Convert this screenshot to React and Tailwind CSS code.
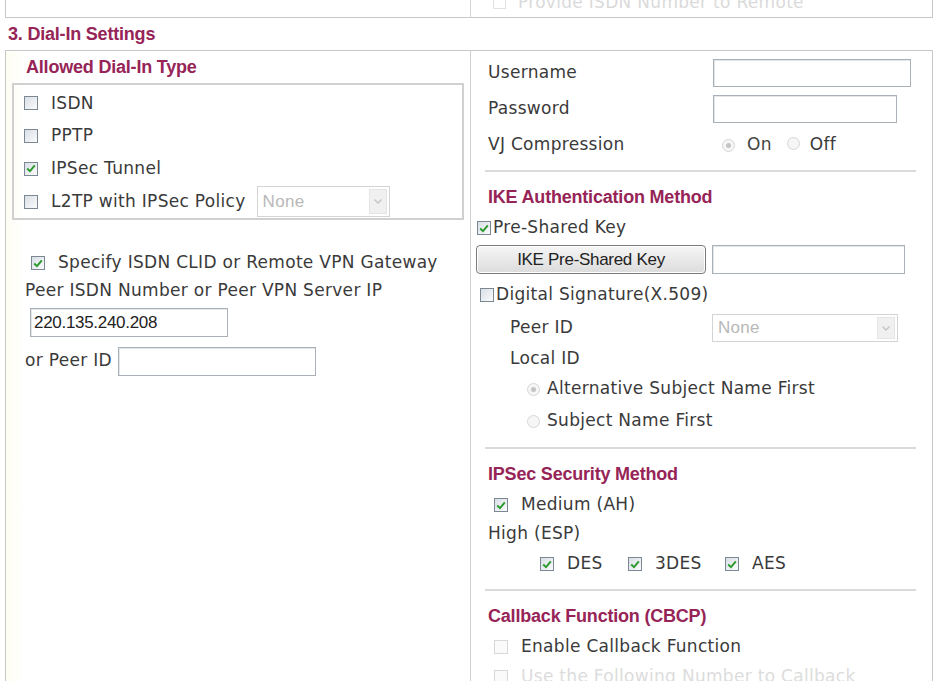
import React from "react";

const Check = ({ checked, disabled }) => (
  <span
    className={
      "inline-flex shrink-0 w-[14px] h-[14px] items-center justify-center border " +
      (disabled
        ? "border-[#d8d8d8] bg-[#fafafa]"
        : "border-[#7b8894] bg-gradient-to-br from-[#d9dfe6] to-[#fbfbfb]")
    }
  >
    {checked && (
      <svg width="10" height="9" viewBox="0 0 10 9">
        <path d="M1.2 4.5 L4 7.2 L8.8 1.4" fill="none" stroke="#2a9a2a" strokeWidth="1.9" />
      </svg>
    )}
  </span>
);

const Radio = ({ checked }) => (
  <span className="inline-flex shrink-0 w-[13px] h-[13px] rounded-full border border-[#d6d6d6] bg-[#f6f6f6] items-center justify-center">
    {checked && <span className="w-[5px] h-[5px] rounded-full bg-[#c4c4c4]" />}
  </span>
);

const Heading = ({ children, className = "" }) => (
  <div
    className={"text-[18px] font-bold text-[#962457] tracking-[-0.2px] " + className}
    style={{ fontFamily: '"Liberation Sans", Arial, sans-serif' }}
  >
    {children}
  </div>
);

const Input = ({ className = "", value = "" }) => (
  <div
    className={
      "border border-[#a9b0b8] bg-white shadow-[inset_1px_1px_0_#e4e7ea] flex items-center px-[3px] text-[17px] text-[#222] tracking-[-0.3px] " +
      className
    }
    style={{ fontFamily: '"Liberation Sans", Arial, sans-serif' }}
  >
    {value}
  </div>
);

const Select = ({ className = "" }) => (
  <div
    className={"border border-[#d4d4d4] bg-white flex items-stretch text-[17px] text-[#b8b8b8] " + className}
    style={{ fontFamily: '"Liberation Sans", Arial, sans-serif' }}
  >
    <span className="flex-1 flex items-center pl-[5px]">None</span>
    <span className="w-[18px] m-[2px] bg-[#f0f0f0] border border-[#e4e4e4] flex items-center justify-center">
      <svg width="8" height="5" viewBox="0 0 8 5">
        <path d="M0.5 0.5 L4 4 L7.5 0.5" fill="none" stroke="#c4c4c4" strokeWidth="1.4" />
      </svg>
    </span>
  </div>
);

const Sep = ({ className = "" }) => (
  <div className={"shrink-0 ml-[14px] w-[431px] h-[2px] bg-[#dadada] " + className} />
);

export default function App() {
  return (
    <div
      className="w-[937px] h-[681px] overflow-hidden bg-white text-[17px] text-[#3a3a3a] tracking-[0.3px]"
      style={{ fontFamily: '"DejaVu Sans", Verdana, sans-serif' }}
    >
      {/* top partial box */}
      <div className="ml-[5px] w-[928px] h-[18px] flex border-x border-b border-[#c8c8c8]">
        <div className="w-[465px] border-r border-[#d4d4d4]" />
        <div className="flex-1 overflow-hidden pl-[22px]">
          <div className="-mt-[10px] flex items-center gap-[12px] text-[#dadada]">
            <span className="w-[13px] h-[13px] border border-[#e2e2e2]" />
            <span>Provide ISDN Number to Remote</span>
          </div>
        </div>
      </div>

      {/* section heading */}
      <div className="h-[32px] flex items-center pl-[8px]">
        <Heading>3. Dial-In Settings</Heading>
      </div>

      {/* main box */}
      <div className="ml-[5px] w-[928px] border-t border-x border-[#c8c8c8] flex">
        {/* left cell */}
        <div className="w-[465px] border-r border-[#cfcfcf] flex flex-col bg-gradient-to-r from-[#fdfdf3] via-white via-[4%] to-white">
          <div className="h-[32px] flex items-center pl-[20px]">
            <Heading>Allowed Dial-In Type</Heading>
          </div>
          <div className="ml-[6px] w-[452px] h-[137px] border-2 border-[#d0d0d0] pt-[2px] flex flex-col">
            <div className="h-[33px] flex items-center pl-[10px] gap-[13px]">
              <Check />
              <span>ISDN</span>
            </div>
            <div className="h-[33px] flex items-center pl-[10px] gap-[13px]">
              <Check />
              <span>PPTP</span>
            </div>
            <div className="h-[33px] flex items-center pl-[10px] gap-[13px]">
              <Check checked />
              <span>IPSec Tunnel</span>
            </div>
            <div className="h-[33px] flex items-center pl-[10px] gap-[13px]">
              <Check />
              <span>L2TP with IPSec Policy</span>
              <Select className="-ml-[2px] w-[133px] h-[31px]" />
            </div>
          </div>

          <div className="mt-[29px] h-[28px] flex items-center pl-[25px] gap-[13px]">
            <Check checked />
            <span>Specify ISDN CLID or Remote VPN Gateway</span>
          </div>
          <div className="h-[28px] flex items-center pl-[19px]">Peer ISDN Number or Peer VPN Server IP</div>
          <Input className="mt-[3px] ml-[24px] w-[198px] h-[29px]" value="220.135.240.208" />
          <div className="mt-[9px] h-[30px] flex items-center pl-[19px]">
            <span className="w-[93px]">or Peer ID</span>
            <Input className="w-[198px] h-[29px]" />
          </div>
        </div>

        {/* right cell */}
        <div className="flex-1 flex flex-col pt-[4px]">
          <div className="h-[36px] flex items-center pl-[17px]">
            <span className="w-[225px]">Username</span>
            <Input className="w-[198px] h-[28px]" />
          </div>
          <div className="h-[36px] flex items-center pl-[17px]">
            <span className="w-[225px]">Password</span>
            <Input className="w-[184px] h-[28px]" />
          </div>
          <div className="h-[36px] flex items-center pl-[17px]">
            <span className="w-[234px]">VJ Compression</span>
            <Radio checked />
            <span className="ml-[12px] text-[#444]">On</span>
            <span className="ml-[15px]">
              <Radio />
            </span>
            <span className="ml-[10px]">Off</span>
          </div>
          <Sep className="mt-[7px]" />

          <div className="mt-[8px] h-[34px] flex items-center pl-[17px]">
            <Heading>IKE Authentication Method</Heading>
          </div>
          <div className="h-[28px] flex items-center pl-[6px] gap-[2px]">
            <Check checked />
            <span>Pre-Shared Key</span>
          </div>
          <div className="mt-[3px] h-[29px] flex items-center pl-[5px]">
            <button
              className="w-[230px] h-[29px] rounded-[4px] border border-[#7a7a7a] bg-gradient-to-b from-[#f6f6f6] to-[#dcdcdc] text-[17px] text-[#222] tracking-[-0.3px] shadow-[inset_0_0_0_1px_#fff]"
              style={{ fontFamily: '"Liberation Sans", Arial, sans-serif' }}
            >
              IKE Pre-Shared Key
            </button>
            <Input className="ml-[6px] w-[193px] h-[29px]" />
          </div>
          <div className="mt-[5px] h-[32px] flex items-center pl-[9px] gap-[2px]">
            <Check />
            <span>Digital Signature(X.509)</span>
          </div>
          <div className="h-[34px] flex items-center pl-[39px]">
            <span className="w-[202px]">Peer ID</span>
            <Select className="w-[186px] h-[28px]" />
          </div>
          <div className="h-[28px] flex items-center pl-[39px]">Local ID</div>
          <div className="h-[32px] flex items-center pl-[56px] gap-[7px]">
            <Radio checked />
            <span>Alternative Subject Name First</span>
          </div>
          <div className="h-[32px] flex items-center pl-[56px] gap-[7px]">
            <Radio />
            <span>Subject Name First</span>
          </div>
          <Sep className="mt-[10px]" />

          <div className="mt-[8px] h-[34px] flex items-center pl-[17px]">
            <Heading>IPSec Security Method</Heading>
          </div>
          <div className="h-[28px] flex items-center pl-[23px] gap-[13px]">
            <Check checked />
            <span>Medium (AH)</span>
          </div>
          <div className="h-[30px] flex items-center pl-[17px]">High (ESP)</div>
          <div className="h-[30px] flex items-center pl-[69px]">
            <span className="w-[88px] flex items-center gap-[13px]">
              <Check checked />
              <span>DES</span>
            </span>
            <span className="w-[97px] flex items-center gap-[13px]">
              <Check checked />
              <span>3DES</span>
            </span>
            <span className="flex items-center gap-[13px]">
              <Check checked />
              <span>AES</span>
            </span>
          </div>
          <Sep className="mt-[10px]" />

          <div className="mt-[8px] h-[34px] flex items-center pl-[17px]">
            <Heading>Callback Function (CBCP)</Heading>
          </div>
          <div className="h-[28px] flex items-center pl-[23px] gap-[13px]">
            <Check disabled />
            <span>Enable Callback Function</span>
          </div>
          <div className="h-[32px] flex items-center pl-[23px] gap-[13px] text-[#dcdcdc]">
            <Check disabled />
            <span>Use the Following Number to Callback</span>
          </div>
        </div>
      </div>
    </div>
  );
}
